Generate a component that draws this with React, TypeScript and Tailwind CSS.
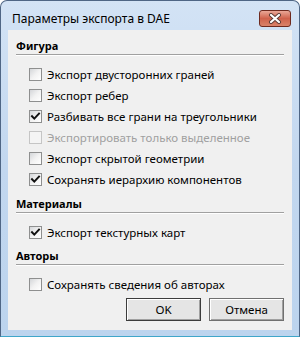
import React from "react";

const font = { fontFamily: '"Noto Sans", "Open Sans", sans-serif' };

function Check({ checked, disabled }: { checked?: boolean; disabled?: boolean }) {
  return (
    <div
      className={
        "w-[13px] h-[13px] border flex items-center justify-center " +
        (disabled ? "border-[#c5c5c5] bg-[#f4f4f4]" : "border-[#8e8f8f] bg-gradient-to-br from-[#d4d6d9] via-[#f2f2f2] to-white")
      }
    >
      {checked && (
        <svg width="11" height="11" viewBox="0 0 11 11">
          <path d="M2 5.2 L4.3 7.6 L9 2.6" fill="none" stroke="#111" strokeWidth="2" strokeLinecap="square" />
        </svg>
      )}
    </div>
  );
}

function Row({ label, checked, disabled }: { label: string; checked?: boolean; disabled?: boolean }) {
  return (
    <div className="h-[21px] flex items-center gap-[5px] pl-[13px]">
      <Check checked={checked} disabled={disabled} />
      <span className={"text-[11.5px] leading-[16px] " + (disabled ? "text-[#a0a0a0]" : "text-black")}>{label}</span>
    </div>
  );
}

function Header({ label, mt }: { label: string; mt: string }) {
  return (
    <div className={mt}>
      <div className="h-[16px] leading-[16px] text-[11px] font-bold text-black">{label}</div>
      <div className="h-px bg-[#a0a0a0]" />
      <div className="h-px bg-white" />
    </div>
  );
}

export default function App() {
  return (
    <div className="w-[300px] h-[337px] bg-white" style={font}>
      <div className="w-[300px] h-[337px] rounded-t-[7px] border border-[#4f6685] border-b-[#3fa6c9] bg-gradient-to-b from-[#d3e3f5] via-[#c2d7ef] to-[#bcd4ee] flex flex-col">
        <div className="h-[29px] flex items-center justify-between pt-[6px]">
          <span className="pl-[11px] text-[12px] text-black leading-[16px]">Параметры экспорта в DAE</span>
          <div className="mr-[8px] mb-[1px] w-[32px] h-[17px] rounded-[3px] border border-[#6e2a1f] bg-gradient-to-b from-[#e9a797] via-[#cf624c] to-[#d9836a] flex items-center justify-center">
            <svg width="14" height="11" viewBox="0 0 14 11">
              <path d="M3 2 L11 9 M11 2 L3 9" stroke="#5a3a35" strokeWidth="4" strokeLinecap="round" />
              <path d="M3 2 L11 9 M11 2 L3 9" stroke="#ffffff" strokeWidth="2.2" strokeLinecap="round" />
            </svg>
          </div>
        </div>
        <div className="mx-[7px] h-[300px] bg-[#f0f0f0] flex flex-col px-[8px]">
          <Header label="Фигура" mt="mt-[8px]" />
          <div className="mt-[8px] flex flex-col">
            <Row label="Экспорт двусторонних граней" />
            <Row label="Экспорт ребер" />
            <Row label="Разбивать все грани на треугольники" checked />
            <Row label="Экспортировать только выделенное" disabled />
            <Row label="Экспорт скрытой геометрии" />
            <Row label="Сохранять иерархию компонентов" checked />
          </div>
          <Header label="Материалы" mt="mt-[6px]" />
          <div className="mt-[8px] flex flex-col">
            <Row label="Экспорт текстурных карт" checked />
          </div>
          <Header label="Авторы" mt="mt-[5px]" />
          <div className="mt-[8px] flex flex-col">
            <Row label="Сохранять сведения об авторах" />
          </div>
          <div className="mt-[3px] flex justify-end gap-[8px]">
            <button className="w-[75px] h-[23px] border border-[#3c3c3c] bg-[#e5e5e5] shadow-[inset_1px_1px_0_#ffffff,inset_-1px_-1px_0_#a0a0a0] text-[11.5px] text-black">OK</button>
            <button className="w-[75px] h-[23px] border border-[#707070] bg-[#e5e5e5] shadow-[inset_1px_1px_0_#ffffff,inset_-1px_-1px_0_#a0a0a0] text-[11.5px] text-black">Отмена</button>
          </div>
        </div>
      </div>
    </div>
  );
}
